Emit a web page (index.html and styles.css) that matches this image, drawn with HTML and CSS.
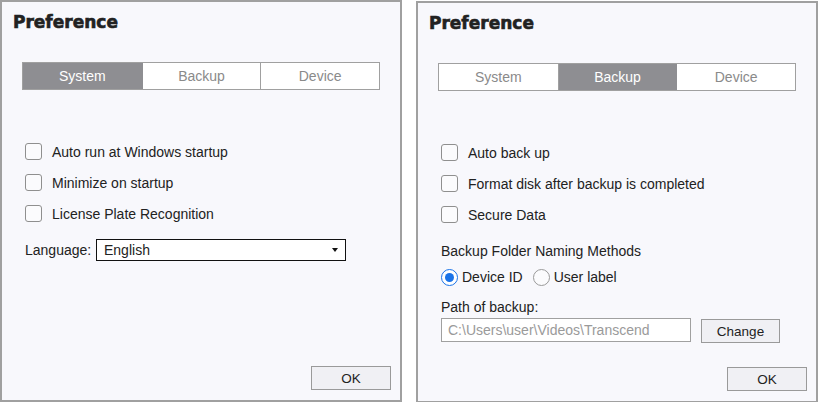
FILE: index.html
```html
<!DOCTYPE html>
<html>
<head>
<meta charset="utf-8">
<link rel="stylesheet" href="styles.css">
</head>
<body>
<div class="screen">
  <section class="panel">
    <h1 class="title">Preference</h1>
    <div class="tabs">
      <div class="tab active">System</div>
      <div class="tab">Backup</div>
      <div class="tab">Device</div>
    </div>
    <div class="options">
      <div class="check"><span class="box"></span><span>Auto run at Windows startup</span></div>
      <div class="check"><span class="box"></span><span>Minimize on startup</span></div>
      <div class="check"><span class="box"></span><span>License Plate Recognition</span></div>
    </div>
    <div class="lang-row">
      <span class="lang-label">Language:</span>
      <div class="select"><span>English</span><span class="caret"></span></div>
    </div>
    <div class="footer"><div class="btn ok">OK</div></div>
  </section>

  <section class="panel panel-right">
    <h1 class="title">Preference</h1>
    <div class="tabs">
      <div class="tab">System</div>
      <div class="tab active">Backup</div>
      <div class="tab">Device</div>
    </div>
    <div class="options">
      <div class="check"><span class="box"></span><span>Auto back up</span></div>
      <div class="check"><span class="box"></span><span>Format disk after backup is completed</span></div>
      <div class="check"><span class="box"></span><span>Secure Data</span></div>
    </div>
    <div class="section-label naming">Backup Folder Naming Methods</div>
    <div class="radios">
      <div class="radio-item"><span class="radio on"></span><span>Device ID</span></div>
      <div class="radio-item"><span class="radio"></span><span>User label</span></div>
    </div>
    <div class="section-label path-label">Path of backup:</div>
    <div class="path-row">
      <div class="path-input">C:\Users\user\Videos\Transcend</div>
      <div class="btn change">Change</div>
    </div>
    <div class="footer"><div class="btn ok">OK</div></div>
  </section>
</div>
</body>
</html>
```

FILE: styles.css
```css
html, body {
  margin: 0;
  padding: 0;
  background: #ffffff;
  overflow: hidden;
}

.screen {
  display: flex;
  gap: 14px;
  align-items: flex-start;
  font-family: "Liberation Sans", Arial, sans-serif;
  font-size: 14px;
  color: #222222;
}

.panel {
  box-sizing: border-box;
  width: 402px;
  height: 402px;
  border: 2px solid #a0a0a0;
  background: #f8f8fc;
  display: flex;
  flex-direction: column;
}

.panel-right {
  margin-top: 1px;
}

.title {
  margin: 0;
  padding: 10px 0 0 11px;
  font-family: "DejaVu Sans", sans-serif;
  font-weight: bold;
  font-size: 17px;
  line-height: 20px;
  color: #222222;
  -webkit-text-stroke: 0.6px #222222;
}

.tabs {
  box-sizing: border-box;
  margin: 30px 0 0 20px;
  width: 358px;
  height: 28px;
  border: 1px solid #a0a0a0;
  display: grid;
  grid-template-columns: 1fr 1fr 1fr;
  background: #ffffff;
}

.tab {
  display: flex;
  align-items: center;
  justify-content: center;
  color: #8a8a8a;
  font-size: 14px;
}

.tab + .tab {
  border-left: 1px solid #a0a0a0;
}

.tab.active {
  background: #8e8e92;
  color: #ffffff;
}

.tab.active + .tab {
  border-left-color: #8e8e92;
}

.options {
  margin-top: 46px;
  display: flex;
  flex-direction: column;
}

.check {
  height: 31px;
  display: flex;
  align-items: center;
  padding-left: 23px;
}

.box {
  box-sizing: border-box;
  width: 17px;
  height: 17px;
  border: 1px solid #8f8f8f;
  border-radius: 3px;
  background: #fbfbfd;
  margin-right: 10px;
}

.lang-row {
  margin-top: 10px;
  padding-left: 23px;
  display: flex;
  align-items: center;
  height: 22px;
}

.lang-label {
  width: 71px;
}

.select {
  box-sizing: border-box;
  width: 250px;
  height: 22px;
  border: 1px solid #111111;
  background: #ffffff;
  display: flex;
  align-items: center;
  justify-content: space-between;
  padding: 0 7px 0 7px;
}

.caret {
  width: 0;
  height: 0;
  border-left: 3.5px solid transparent;
  border-right: 3.5px solid transparent;
  border-top: 4px solid #111111;
}

.footer {
  margin-top: auto;
  display: flex;
  justify-content: flex-end;
  padding: 0 9px 10px 0;
}

.btn {
  box-sizing: border-box;
  height: 24px;
  border: 1px solid #9a9a9a;
  background: #f0f0f4;
  display: flex;
  align-items: center;
  justify-content: center;
  font-size: 13.5px;
  color: #222222;
}

.btn.ok {
  width: 80px;
}

.section-label {
  padding-left: 23px;
  line-height: 20px;
}

.naming {
  margin-top: 11px;
}

.radios {
  margin-top: 6px;
  padding-left: 23px;
  display: flex;
  align-items: center;
  height: 20px;
  gap: 10px;
}

.radio-item {
  display: flex;
  align-items: center;
  gap: 4px;
}

.radio {
  box-sizing: border-box;
  width: 17px;
  height: 17px;
  border-radius: 50%;
  border: 1px solid #9a9a9a;
  background: #fbfbfd;
  display: flex;
  align-items: center;
  justify-content: center;
}

.radio.on {
  border: 1.5px solid #1a73e8;
  background: #ffffff;
}

.radio.on::after {
  content: "";
  width: 9px;
  height: 9px;
  border-radius: 50%;
  background: #1a73e8;
}

.path-label {
  margin-top: 11px;
  line-height: 18px;
}

.path-row {
  margin-top: 2px;
  padding-left: 23px;
  display: flex;
  align-items: flex-start;
  gap: 10px;
}

.path-input {
  box-sizing: border-box;
  width: 250px;
  height: 24px;
  border: 1px solid #a0a0a0;
  background: #ffffff;
  color: #9a9a9a;
  display: flex;
  align-items: center;
  padding-left: 6px;
}

.btn.change {
  width: 79px;
  margin-top: 1px;
}
```
